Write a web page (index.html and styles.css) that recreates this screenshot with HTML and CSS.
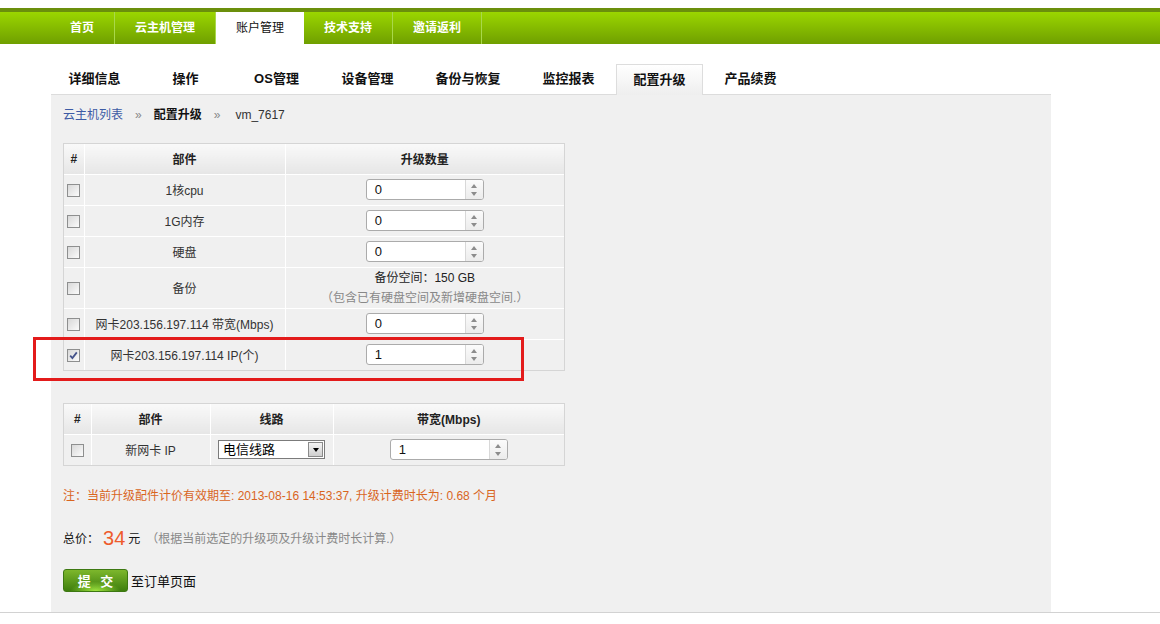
FILE: index.html
```html
<!DOCTYPE html>
<html lang="zh-CN">
<head>
<meta charset="utf-8">
<title>配置升级</title>
<link rel="stylesheet" href="styles.css">
</head>
<body>
<header class="topbar">
  <nav class="mainnav">
    <a class="mainnav-item">首页</a>
    <a class="mainnav-item">云主机管理</a>
    <a class="mainnav-item is-active">账户管理</a>
    <a class="mainnav-item">技术支持</a>
    <a class="mainnav-item">邀请返利</a>
  </nav>
</header>
<div class="page">
  <ul class="tabs">
    <li class="tab">详细信息</li>
    <li class="tab">操作</li>
    <li class="tab">OS管理</li>
    <li class="tab">设备管理</li>
    <li class="tab tab-wide">备份与恢复</li>
    <li class="tab">监控报表</li>
    <li class="tab is-active">配置升级</li>
    <li class="tab">产品续费</li>
  </ul>
  <section class="panel">
    <div class="crumbs"><a class="crumb-link">云主机列表</a><span class="sep">»</span><strong class="crumb-current">配置升级</strong><span class="sep">»</span><span class="crumb-vm">vm_7617</span></div>

    <div class="grid-box grid-upgrade">
      <table class="grid">
        <colgroup><col class="c-a1"><col class="c-a2"><col class="c-a3"></colgroup>
        <tr class="row-head"><th>#</th><th>部件</th><th>升级数量</th></tr>
        <tr class="row"><td><span class="cb"></span></td><td>1核cpu</td><td><span class="spin"><span class="spin-val">0</span><span class="spin-btns"><i class="arr-up"></i><i class="arr-down"></i></span></span></td></tr>
        <tr class="row"><td><span class="cb"></span></td><td>1G内存</td><td><span class="spin"><span class="spin-val">0</span><span class="spin-btns"><i class="arr-up"></i><i class="arr-down"></i></span></span></td></tr>
        <tr class="row"><td><span class="cb"></span></td><td>硬盘</td><td><span class="spin"><span class="spin-val">0</span><span class="spin-btns"><i class="arr-up"></i><i class="arr-down"></i></span></span></td></tr>
        <tr class="row row-tall"><td><span class="cb"></span></td><td>备份</td><td><div class="backup-line">备份空间：150 GB</div><div class="backup-hint">（包含已有硬盘空间及新增硬盘空间.）</div></td></tr>
        <tr class="row"><td><span class="cb"></span></td><td>网卡203.156.197.114 带宽(Mbps)</td><td><span class="spin"><span class="spin-val">0</span><span class="spin-btns"><i class="arr-up"></i><i class="arr-down"></i></span></span></td></tr>
        <tr class="row"><td><span class="cb is-checked"><svg class="tick" viewBox="0 0 11 11" width="11" height="11"><path d="M2.2 5.6 L4.4 8 L8.8 2.4" fill="none" stroke="#44528a" stroke-width="1.8"/></svg></span></td><td>网卡203.156.197.114 IP(个)</td><td><span class="spin"><span class="spin-val">1</span><span class="spin-btns"><i class="arr-up"></i><i class="arr-down"></i></span></span></td></tr>
      </table>
      <div class="highlight"></div>
    </div>

    <div class="grid-box grid-newip">
      <table class="grid">
        <colgroup><col class="c-b1"><col class="c-b2"><col class="c-b3"><col class="c-b4"></colgroup>
        <tr class="row-head"><th>#</th><th>部件</th><th>线路</th><th>带宽(Mbps)</th></tr>
        <tr class="row row-ip"><td><span class="cb"></span></td><td>新网卡 IP</td><td><span class="select"><span class="select-val">电信线路</span><span class="select-btn"><i class="select-arr"></i></span></span></td><td><span class="spin"><span class="spin-val">1</span><span class="spin-btns"><i class="arr-up"></i><i class="arr-down"></i></span></span></td></tr>
      </table>
    </div>

    <p class="note">注：当前升级配件计价有效期至: 2013-08-16 14:53:37, 升级计费时长为: 0.68 个月</p>

    <p class="total">总价：<span class="price">34</span><span class="unit">元</span><span class="hint">（根据当前选定的升级项及升级计费时长计算.）</span></p>

    <div class="actions"><button class="btn-submit">提 交</button><span class="btn-after">至订单页面</span></div>
  </section>
</div>
</body>
</html>
```

FILE: styles.css
```css
html, body {
  margin: 0;
  padding: 0;
}
body {
  font-family: "Liberation Sans", "Noto Sans CJK SC", sans-serif;
  font-size: 12px;
  color: #333;
  background: #fff;
}

/* top green bar */
.topbar {
  margin-top: 8px;
  height: 32px;
  border-top: 4px solid #6b8f0c;
  background: linear-gradient(#9bd600, #6f9f00);
}
.mainnav {
  display: flex;
  height: 32px;
  padding-left: 50px;
}
.mainnav-item {
  padding: 0 20px;
  line-height: 32px;
  color: #fff;
  font-weight: bold;
  border-right: 1px solid #a9d84a;
  text-decoration: none;
}
.mainnav-item.is-active {
  background: #fff;
  color: #111;
  font-weight: normal;
  border-right: none;
}

/* secondary tabs */
.page {
  border-bottom: 1px solid #d2d2d2;
}
.tabs {
  display: flex;
  gap: 4px;
  list-style: none;
  margin: 20px 0 0 51px;
  padding: 0;
  height: 30px;
}
.tab {
  width: 87px;
  box-sizing: border-box;
  text-align: center;
  line-height: 30px;
  font-size: 13px;
  font-weight: bold;
  color: #111;
}
.tab-wide {
  width: 106px;
}
.tab.is-active {
  background: linear-gradient(#ffffff, #eeeeee);
  border: 1px solid #dddddd;
  border-bottom: none;
  line-height: 29px;
  position: relative;
  z-index: 1;
  height: 31px;
}

/* panel */
.panel {
  width: 1000px;
  margin-left: 51px;
  box-sizing: border-box;
  background: #f0f0f0;
  border-top: 1px solid #dcdcdc;
  padding: 10px 12px 20px;
}
.crumbs {
  line-height: 20px;
  color: #333;
}
.crumb-link {
  color: #3d5ba5;
}
.sep {
  color: #888;
  margin: 0 12px;
}
.crumb-current {
  color: #111;
}
.crumb-vm {
  color: #333;
  margin-left: 3px;
}

/* tables */
.grid-box {
  position: relative;
  width: 502px;
  box-sizing: border-box;
  border: 1px solid #d5d5d5;
}
.grid-upgrade {
  margin-top: 18px;
}
.grid-newip {
  margin-top: 32px;
}
.grid {
  width: 100%;
  table-layout: fixed;
  border-collapse: collapse;
  border-style: hidden;
}
.grid th,
.grid td {
  border: 1px solid #fff;
  padding: 0;
  text-align: center;
  vertical-align: middle;
}
.grid th {
  background: linear-gradient(#f9f9f9, #e6e6e6);
  font-weight: bold;
  color: #222;
}
.grid td {
  background: #f0f0f0;
  color: #333;
}
.row-head {
  height: 30px;
}
.row {
  height: 31px;
}
.row-tall {
  height: 41px;
}
.row-ip {
  height: 31px;
}
.c-a1 { width: 20px; }
.c-a2 { width: 201px; }
.c-a3 { width: 279px; }
.c-b1 { width: 27px; }
.c-b2 { width: 119px; }
.c-b3 { width: 123px; }
.c-b4 { width: 231px; }

.backup-line {
  line-height: 20px;
  color: #222;
}
.backup-hint {
  line-height: 20px;
  color: #888;
}

/* checkbox */
.cb {
  display: inline-block;
  width: 13px;
  height: 13px;
  box-sizing: border-box;
  border: 1px solid #8e8f8f;
  background: linear-gradient(135deg, #d8d8d8, #fbfbfb);
  vertical-align: middle;
}
.tick {
  display: block;
}

/* spinner */
.spin {
  display: inline-flex;
  width: 118px;
  height: 21px;
  box-sizing: border-box;
  border: 1px solid #ababab;
  border-radius: 3px;
  background: #fff;
  vertical-align: middle;
  text-align: left;
}
.spin-val {
  flex: 1;
  padding-left: 8px;
  line-height: 20px;
  font-size: 13px;
  color: #111;
}
.spin-btns {
  width: 17px;
  border-left: 1px solid #d8d8d8;
  border-radius: 0 2px 2px 0;
  background: linear-gradient(#fbfbfb, #ececec);
  display: flex;
  flex-direction: column;
  align-items: center;
  justify-content: center;
  gap: 4px;
}
.arr-up,
.arr-down {
  display: block;
  width: 0;
  height: 0;
  border-left: 3.5px solid transparent;
  border-right: 3.5px solid transparent;
}
.arr-up {
  border-bottom: 4px solid #8c8c8c;
}
.arr-down {
  border-top: 4px solid #8c8c8c;
}

/* select */
.select {
  display: inline-flex;
  align-items: center;
  width: 107px;
  height: 19px;
  box-sizing: border-box;
  border: 1px solid #7b7b7b;
  background: #fff;
  vertical-align: middle;
  text-align: left;
}
.select-val {
  flex: 1;
  padding-left: 4px;
  font-size: 13px;
  color: #000;
  line-height: 17px;
}
.select-btn {
  width: 15px;
  height: 15px;
  margin-right: 1px;
  box-sizing: border-box;
  border: 1px solid #8a8a8a;
  background: linear-gradient(#f4f4f4, #cfcfcf);
  display: flex;
  align-items: center;
  justify-content: center;
}
.select-arr {
  display: block;
  width: 0;
  height: 0;
  border-left: 3.5px solid transparent;
  border-right: 3.5px solid transparent;
  border-top: 4px solid #000;
}

/* red highlight overlay */
.highlight {
  position: absolute;
  left: -31px;
  top: 193px;
  width: 491px;
  height: 44px;
  box-sizing: border-box;
  border: 3px solid #e31b1b;
  pointer-events: none;
}

/* notes */
.note {
  margin: 20px 0 0;
  line-height: 20px;
  color: #d9651e;
}
.total {
  display: flex;
  align-items: center;
  height: 20px;
  margin: 23px 0 0;
  line-height: 20px;
  color: #111;
}
.price {
  font-size: 20px;
  line-height: 20px;
  color: #ee5b2b;
  margin: -3px 3px 0 4px;
}
.unit {
  color: #111;
}
.hint {
  color: #888;
  margin-left: 6px;
}

/* submit */
.actions {
  display: flex;
  align-items: center;
  margin-top: 20px;
}
.btn-submit {
  width: 65px;
  height: 23px;
  padding: 0;
  border: 1px solid #3d7812;
  border-radius: 3px;
  background: radial-gradient(ellipse 40% 45% at 50% 100%, rgba(170, 240, 70, 0.9), rgba(170, 240, 70, 0) 100%), linear-gradient(#7db72c, #3e7e0d);
  color: #fff;
  font-family: "Liberation Sans", "Noto Sans CJK SC", sans-serif;
  font-weight: bold;
  font-size: 13px;
  letter-spacing: 3px;
  text-indent: 3px;
}
.btn-after {
  margin-left: 3px;
  font-size: 13px;
  color: #111;
}
```
